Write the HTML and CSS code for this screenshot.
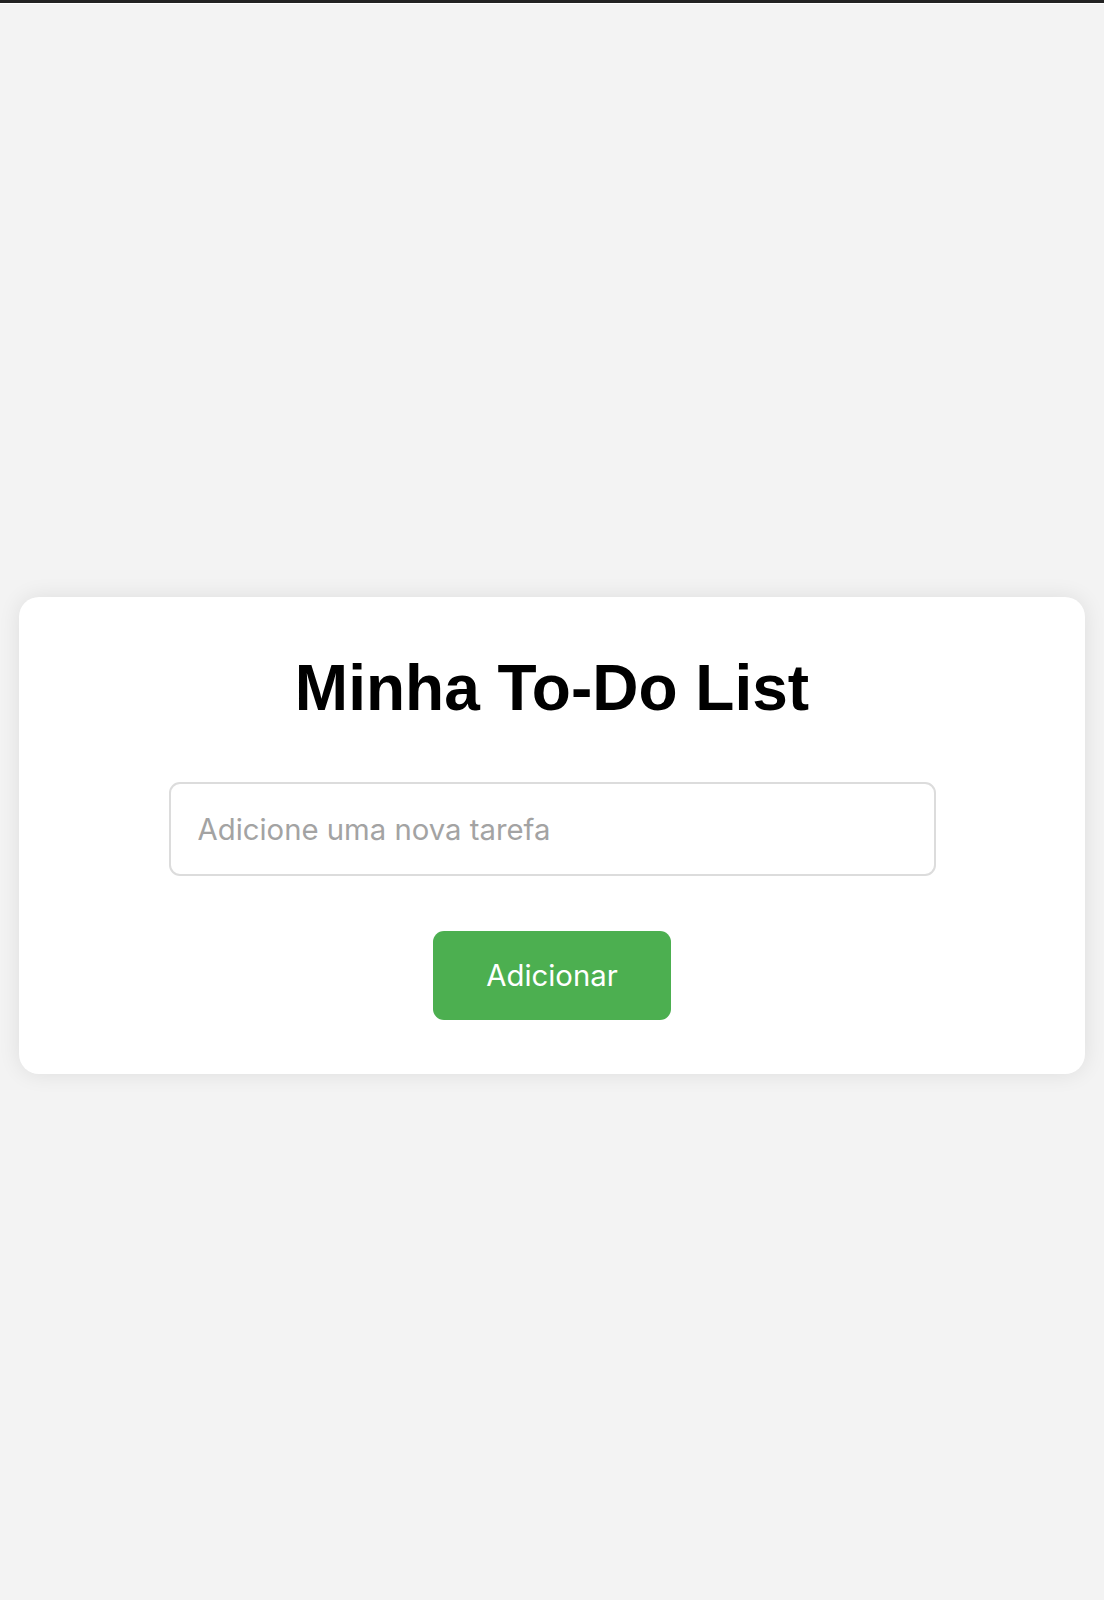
FILE: index.html
```html
<!DOCTYPE html>
<html lang="pt">
<head>
<meta charset="utf-8">
<title>Minha To-Do List</title>
<link rel="stylesheet" href="styles.css">
</head>
<body>
<div class="topbar"></div>
<main class="page">
  <section class="card">
    <h1 class="title">Minha To-Do List</h1>
    <input class="task-input" type="text" placeholder="Adicione uma nova tarefa">
    <button class="add-btn" type="button">Adicionar</button>
  </section>
</main>
</body>
</html>
```

FILE: styles.css
```css
html, body {
  margin: 0;
  padding: 0;
}
body {
  background: #f3f3f3;
  font-family: "Liberation Sans", Arial, sans-serif;
  min-height: 1600px;
  display: flex;
  flex-direction: column;
}
.topbar {
  height: 3px;
  background: #222222;
  border-bottom: 1px solid #ffffff;
}
.page {
  padding: 593px 19px 0;
}
.card {
  background: #ffffff;
  border-radius: 20px;
  box-shadow: 0 0 22px rgba(0, 0, 0, 0.09);
  padding: 54px 0 54px;
  display: flex;
  flex-direction: column;
  align-items: center;
}
.title {
  margin: 0;
  font-family: "Liberation Sans", Arial, sans-serif;
  font-weight: 700;
  font-size: 64px;
  line-height: 74px;
  letter-spacing: 0;
  color: #000;
}
.task-input {
  margin-top: 57px;
  box-sizing: border-box;
  width: 767px;
  height: 94px;
  border: 2px solid #dcdcdc;
  border-radius: 11px;
  padding: 0 27px;
  font-family: "Inter", "Liberation Sans", sans-serif;
  font-size: 29.3px;
  color: #333;
  background: #fff;
  outline: none;
}
.task-input::placeholder {
  color: #a3a3a3;
}
.add-btn {
  margin-top: 55px;
  width: 238px;
  height: 89px;
  border: none;
  border-radius: 11px;
  background: #4caf50;
  color: #ffffff;
  font-family: "Inter", "Liberation Sans", sans-serif;
  font-size: 29.3px;
  padding: 0;
  cursor: pointer;
}
```
